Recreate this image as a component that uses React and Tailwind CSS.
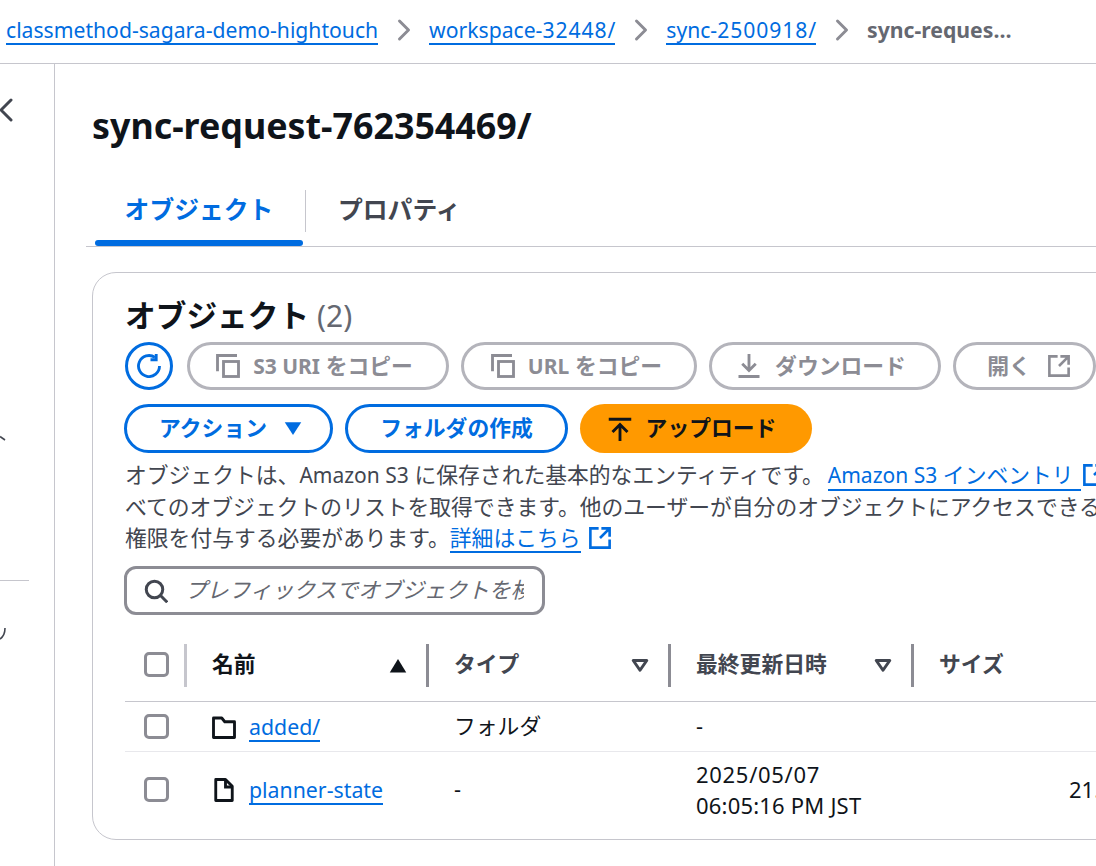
import { ChevronLeft, ChevronRight } from "lucide-react";

function Icon({ children, className = "w-6 h-6" }) {
  return (
    <svg viewBox="0 0 16 16" fill="none" stroke="currentColor" strokeWidth="1.9" className={`shrink-0 ${className}`}>
      {children}
    </svg>
  );
}

const CopyIcon = () => (
  <Icon>
    <path d="M1 11.500V1h13" />
    <rect x="5" y="5" width="10" height="10" />
  </Icon>
);
const DownloadIcon = () => (
  <Icon>
    <path d="M8 0v10.500M3.500 6.500l4.500 4.500 4.500-4.500M1 15h14" />
  </Icon>
);
const ExternalIcon = ({ className = "w-[22px] h-[22px]" }) => (
  <Icon className={className}>
    <path d="M7 1H1v14h14V9" />
    <path d="M9 1h6v6M15 1 8 8" />
  </Icon>
);
const UploadIcon = () => (
  <Icon>
    <path d="M0.500 1.500h15M8 16V5M3 10l5-5 5 5" />
  </Icon>
);

// latin runs sit a little smaller than the japanese text
const L = ({ children }) => <span className="text-[21px]">{children}</span>;
const Digits = ({ children }) => <span className="tracking-[0.9px]">{children}</span>;

function Link({ children, className = "" }) {
  return <a className={`inline-block border-b-2 border-[#006ce0] text-[#006ce0] leading-[27px] ${className}`}>{children}</a>;
}

function Crumb({ children }) {
  return (
    <>
      <Link className="text-[21.15px]">{children}</Link>
      <ChevronRight className="w-9 h-9 mx-[7.5px] text-[#8c8c94]" strokeWidth={2} />
    </>
  );
}

function ToolButton({ children, className = "" }) {
  return (
    <button type="button" className={`h-12 rounded-full border-[3px] border-[#b4b4bb] text-[#8c8c94] font-bold flex items-center justify-center ${className}`}>
      {children}
    </button>
  );
}

function BlueButton({ children, className = "" }) {
  return (
    <button type="button" className={`h-[49px] rounded-full border-[3px] border-[#006ce0] text-[#006ce0] font-bold flex items-center justify-center ${className}`}>
      {children}
    </button>
  );
}

const Checkbox = () => <span className="block w-[25px] h-[25px] rounded-[5px] border-[3px] border-[#8c8c94]" />;

const SortDown = () => (
  <svg viewBox="0 0 16 16" className="w-6 h-6 text-[#424650]" fill="none" stroke="currentColor" strokeWidth="2">
    <path d="M3.500 5h9L8 11.500z" strokeLinejoin="round" />
  </svg>
);

const rowGrid = "grid grid-cols-[62px_242px_242px_243px_1fr] items-center";

function HeaderCell({ label, sort, dark }) {
  return (
    <div className="h-[43px] flex items-center justify-between pl-[25px] pr-[16px] pb-[2px] border-r-[3px] border-[#8c8c94]">
      <span className={`font-bold ${dark ? "text-[#0f141a]" : "text-[#424650]"}`}>{label}</span>
      {sort}
    </div>
  );
}

export default function App() {
  return (
    <div className="w-[1096px] h-[866px] overflow-hidden bg-white text-[21.8px] text-[#0f141a] font-['Noto_Sans','Noto_Sans_CJK_JP',sans-serif]">
      <header className="h-16 border-b border-[#c6c6cd] flex items-center pl-[6px] pb-[3px] whitespace-nowrap">
        <Crumb>classmethod-sagara-demo-hightouch</Crumb>
        <Crumb>
          workspace-<Digits>32448</Digits>/
        </Crumb>
        <Crumb>
          sync-<Digits>2500918</Digits>/
        </Crumb>
        <span className="text-[21.2px] font-bold text-[#656871]">sync-reques…</span>
      </header>

      <div className="flex h-[802px]">
        <aside className="w-[55px] shrink-0 border-r border-[#c6c6cd] overflow-hidden">
          <ChevronLeft className="w-10 h-10 -ml-[14px] mt-[26px] text-[#424650]" strokeWidth={1.8} />
          <svg viewBox="0 0 8 8" className="w-2 h-2 mt-[304px] text-[#424650]" fill="none" stroke="currentColor" strokeWidth="1.6">
            <path d="M0 2.500 5 6" />
          </svg>
          <div className="w-[29px] h-px bg-[#c6c6cd] mt-[138px]" />
          <svg viewBox="0 0 8 16" className="w-2 h-4 mt-[46px] text-[#424650]" fill="none" stroke="currentColor" strokeWidth="1.6">
            <path d="M5 1C5 6 3 10 0 12" />
          </svg>
        </aside>

        <main className="flex-1 min-w-0 pl-[37px] overflow-hidden">
          <h1 className="mt-[37px] text-[35.8px] leading-[48px] font-bold whitespace-nowrap">sync-request-762354469/</h1>

          <div className="mt-[41px] -ml-[6px] h-[57px] border-b border-[#c6c6cd] flex w-[1100px]">
            <div className="relative w-[208px] ml-[9px]">
              <div className="h-[39px] flex items-center justify-center text-[24.8px] font-bold text-[#006ce0]">オブジェクト</div>
              <div className="absolute left-0 right-0 top-[50px] h-[6px] rounded-full bg-[#006ce0]" />
            </div>
            <div className="ml-[2px] h-[42px] w-px bg-[#c6c6cd]" />
            <div className="h-[39px] flex items-center pl-[32px] text-[24.8px] font-bold text-[#424650]">プロパティ</div>
          </div>

          <section className="mt-[25px] w-[1100px] h-[568px] rounded-[24px] border border-[#c6c6cd] pl-[32px] pt-[22px]">
            <h2 className="h-10 text-[30.7px] leading-[40px] font-bold whitespace-nowrap">
              オブジェクト <span className="font-normal text-[#656871] text-[30px]">(2)</span>
            </h2>

            <div className="mt-[7px] flex gap-[12px] whitespace-nowrap">
              <button type="button" className="w-12 h-12 mr-[2px] rounded-full border-[3px] border-[#006ce0] text-[#006ce0] flex items-center justify-center">
                <Icon>
                  <path d="M15 8a7 7 0 1 1-3-5.700" />
                  <path d="M12.800 0v3.800H9" />
                </Icon>
              </button>
              <ToolButton className="w-[262px] gap-[13px] pr-[7px]">
                <CopyIcon />
                <span>
                  <L>S3 URI</L> をコピー
                </span>
              </ToolButton>
              <ToolButton className="w-[236px] gap-[13px] pr-[5px]">
                <CopyIcon />
                <span>
                  <L>URL</L> をコピー
                </span>
              </ToolButton>
              <ToolButton className="w-[232px] gap-[14px] pr-[7px]">
                <DownloadIcon />
                ダウンロード
              </ToolButton>
              <ToolButton className="w-[143px] gap-[17px] pl-[8px]">
                開く
                <ExternalIcon />
              </ToolButton>
            </div>

            <div className="mt-[14px] flex gap-[12px] whitespace-nowrap -ml-px">
              <BlueButton className="w-[209px] gap-[14px] pl-[7px]">
                アクション
                <svg viewBox="0 0 16 16" className="w-6 h-6" fill="currentColor">
                  <path d="M2.500 3.500h11L8 12z" />
                </svg>
              </BlueButton>
              <BlueButton className="w-[223px]">フォルダの作成</BlueButton>
              <button type="button" className="h-[49px] w-[232px] pr-[8px] rounded-full bg-[#ff9900] font-bold flex items-center justify-center gap-[14px]">
                <UploadIcon />
                アップロード
              </button>
            </div>

            <p className="mt-[6px] h-[93px] leading-[31px] text-[#424650] whitespace-nowrap">
              オブジェクトは、<L>Amazon S3</L> に保存された基本的なエンティティです。
              <Link className="leading-[25px] ml-[4px] pr-[7px]">
                <L>Amazon S3</L> インベントリ
              </Link>
              <ExternalIcon className="inline-block w-[22px] h-[22px] text-[#006ce0] align-[-3px] ml-[2px]" />
              <br />
              べてのオブジェクトのリストを取得できます。他のユーザーが自分のオブジェクトにアクセスできるようにするには、明示的に
              <br />
              権限を付与する必要があります。
              <Link className="leading-[25px]">詳細はこちら</Link>
              <ExternalIcon className="inline-block w-[22px] h-[22px] text-[#006ce0] align-[-3px] ml-[8px]" />
            </p>

            <div className="mt-[14px] -ml-px w-[421px] h-[49px] rounded-[12px] border-[3px] border-[#8c8c94] flex items-center pl-[17px] pr-[18px] gap-[17px]">
              <svg viewBox="0 0 16 16" className="w-6 h-6 shrink-0 text-[#424650]" fill="none" stroke="currentColor" strokeWidth="2">
                <circle cx="7" cy="7" r="5.500" />
                <path d="M11 11 15.500 15.500" />
              </svg>
              <span className="italic text-[#656871] whitespace-nowrap overflow-hidden">プレフィックスでオブジェクトを検索</span>
            </div>

            <div className={`${rowGrid} mt-[29px] h-[58px] pb-[14px] border-b border-[#c6c6cd]`}>
              <div className="h-[43px] pl-[19px] pb-[2px] flex items-center border-r-[3px] border-[#c6c6cd]">
                <Checkbox />
              </div>
              <HeaderCell
                label="名前"
                dark
                sort={
                  <svg viewBox="0 0 16 16" className="w-6 h-6 text-[#0f141a]" fill="currentColor">
                    <path d="M2.500 13 8 4l5.500 9z" />
                  </svg>
                }
              />
              <HeaderCell label="タイプ" sort={<SortDown />} />
              <HeaderCell label="最終更新日時" sort={<SortDown />} />
              <div className="pl-[25px] pb-[2px] font-bold text-[#424650]">サイズ</div>
            </div>

            <div className={`${rowGrid} h-[50px] border-b border-[#e8e8ec]`}>
              <div className="pl-[19px]">
                <Checkbox />
              </div>
              <div className="pl-[25px] flex items-center gap-[13px]">
                <Icon>
                  <path d="M1 2h5.500l2 2.500H15V15H1z" strokeLinejoin="round" />
                </Icon>
                <Link className="text-[21.3px] leading-[26px] mt-[1px]">added/</Link>
              </div>
              <div className="pl-[25px]">フォルダ</div>
              <div className="pl-[25px]">-</div>
              <div />
            </div>

            <div className={`${rowGrid} h-[87px] pb-[12px]`}>
              <div className="pl-[19px]">
                <Checkbox />
              </div>
              <div className="pl-[25px] flex items-center gap-[13px]">
                <Icon>
                  <path d="M2.500 1H9l4.500 4.500V15h-11z" strokeLinejoin="round" />
                  <path d="M9 1v5h4.500" />
                </Icon>
                <Link className="text-[21.3px] leading-[26px] mt-[1px]">planner-state</Link>
              </div>
              <div className="pl-[25px]">-</div>
              <div className="pl-[25px] text-[22px] leading-[31px] whitespace-nowrap">
                <span className="tracking-[0.7px]">2025/05/07</span>
                <br />
                <span className="tracking-[0.2px]">06:05:16 PM JST</span>
              </div>
              <div className="pl-[155px] text-[22px] whitespace-nowrap">21.3 KB</div>
            </div>
          </section>
        </main>
      </div>
    </div>
  );
}
